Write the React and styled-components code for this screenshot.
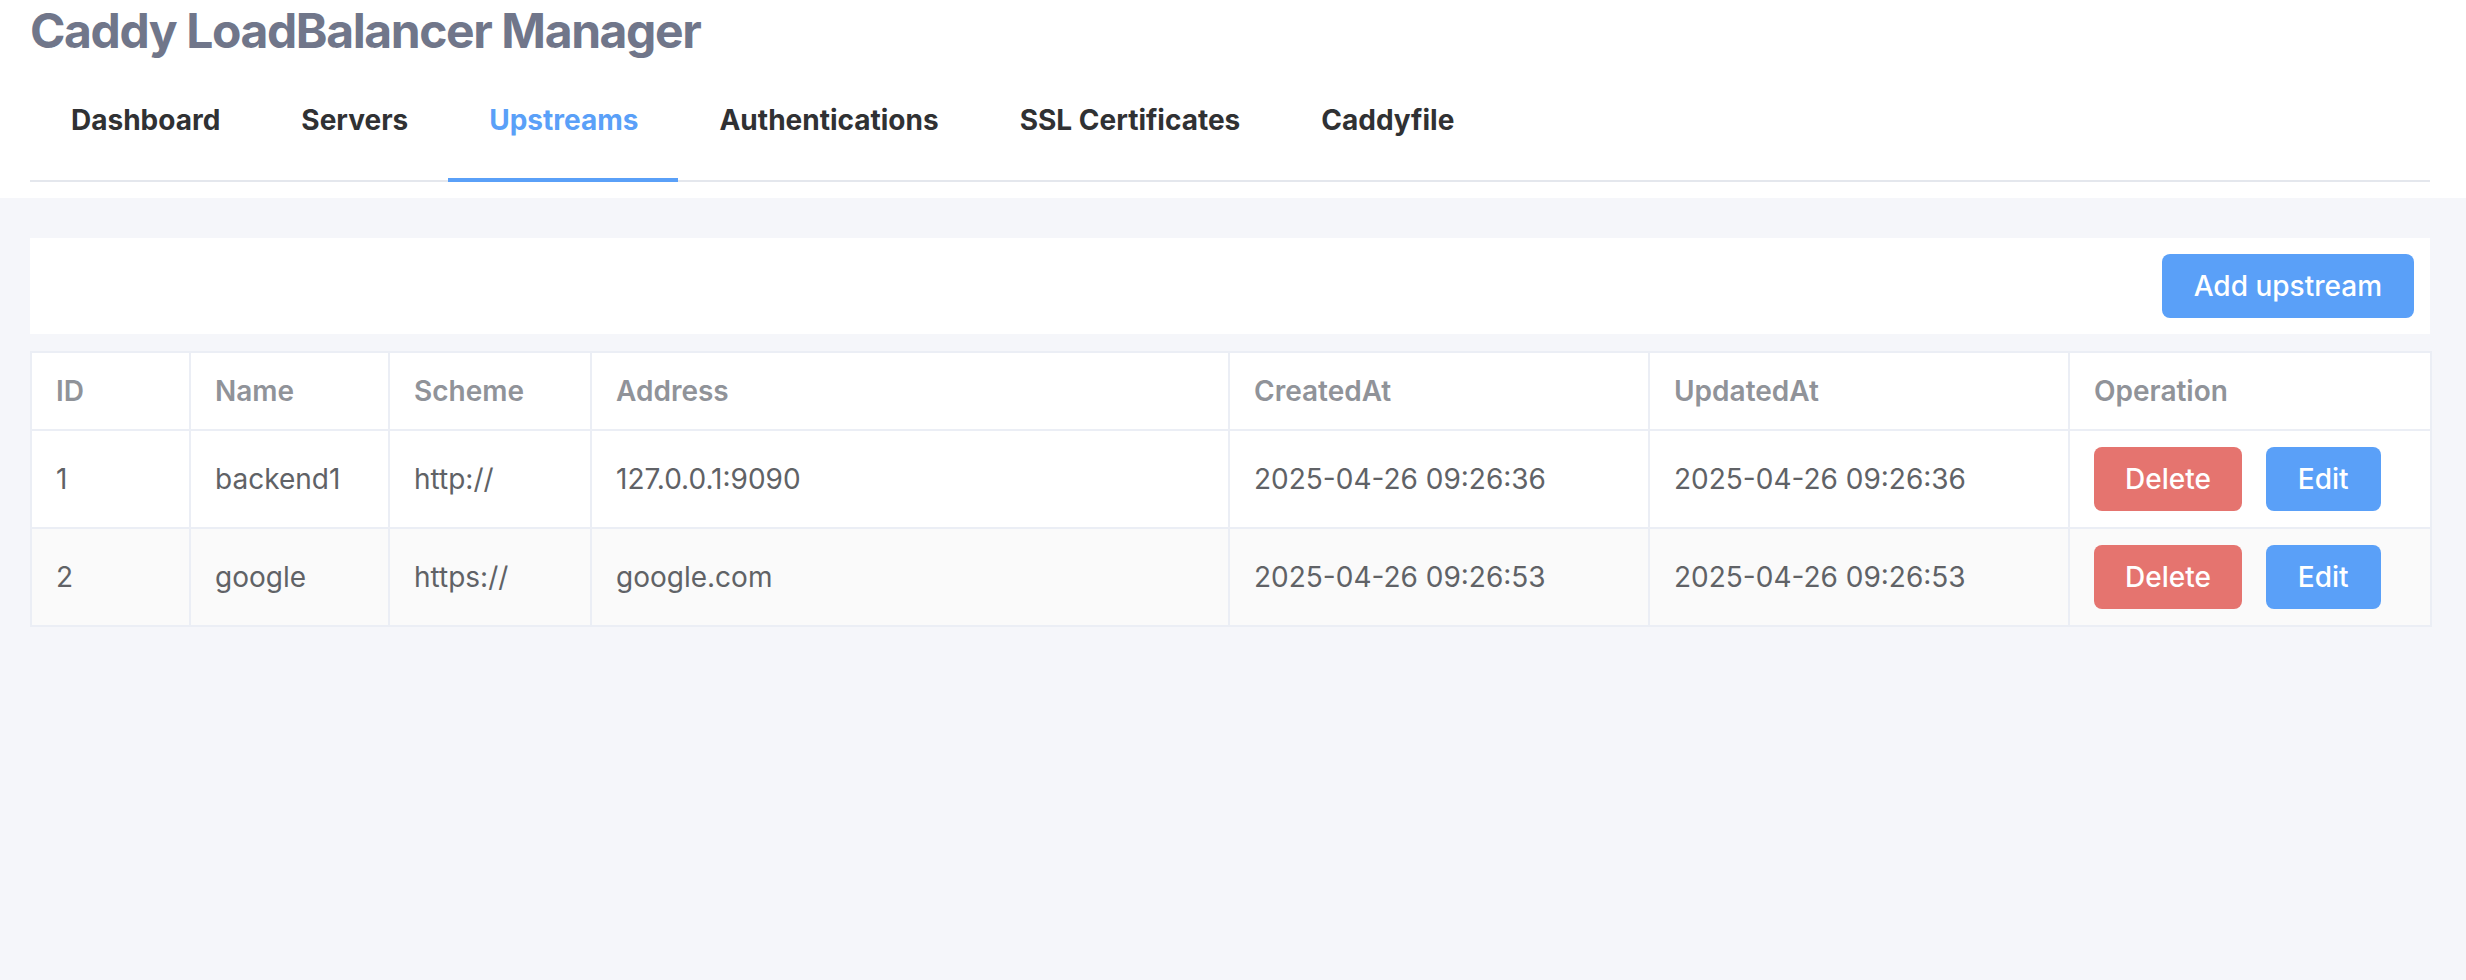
import React from 'react';
import styled, { createGlobalStyle } from 'styled-components';

const GlobalStyle = createGlobalStyle`
    html, body {
        margin: 0;
        padding: 0;
        background: #f5f6fa;
        font-family: Inter, "Noto Sans", "Liberation Sans", sans-serif;
    }
    * { box-sizing: border-box; }
`;

const TABS = [ 'Dashboard', 'Servers', 'Upstreams', 'Authentications', 'SSL Certificates', 'Caddyfile' ];

const COLUMNS = [
    { key: 'id', label: 'ID', width: 159 },
    { key: 'name', label: 'Name', width: 199 },
    { key: 'scheme', label: 'Scheme', width: 202 },
    { key: 'address', label: 'Address', width: 638 },
    { key: 'createdAt', label: 'CreatedAt', width: 420 },
    { key: 'updatedAt', label: 'UpdatedAt', width: 420 },
];

const UPSTREAMS = [
    { id: 1, name: 'backend1', scheme: 'http://', address: '127.0.0.1:9090', createdAt: '2025-04-26 09:26:36', updatedAt: '2025-04-26 09:26:36' },
    { id: 2, name: 'google', scheme: 'https://', address: 'google.com', createdAt: '2025-04-26 09:26:53', updatedAt: '2025-04-26 09:26:53' },
];

const
    Header = styled.header`
        background: #fff;
        padding: 0 36px 16px 30px;
    `,
    Title = styled.h1`
        margin: 0;
        height: 62px;
        line-height: 62px;
        font-size: 48px;
        font-weight: 700;
        letter-spacing: -1.4px;
        color: #70768a;
    `,
    TabBar = styled.nav`
        display: flex;
        border-bottom: 2px solid #e4e7ed;
    `,
    Tab = styled.div`
        height: 120px;
        padding: 0 40px 0 41px;
        display: flex;
        align-items: center;
        font-size: 28px;
        font-weight: 700;
        color: ${ p => p.active ? '#5aa0f8' : '#303133' };
        border-bottom: 4px solid ${ p => p.active ? '#5aa0f8' : 'transparent' };
        margin-bottom: -2px;
    `,
    Main = styled.main`
        padding: 40px 36px 40px 30px;
    `,
    Toolbar = styled.div`
        display: flex;
        justify-content: flex-end;
        padding: 16px;
        background: #fff;
        margin-bottom: 17px;
    `,
    Button = styled.button`
        height: 64px;
        padding: 0 ${ p => p.pad || 32 }px;
        border: none;
        border-radius: 8px;
        font-family: inherit;
        font-size: 28px;
        font-weight: 500;
        color: #fff;
        background: ${ p => p.danger ? '#e5746f' : '#5aa0f8' };
        cursor: pointer;
    `,
    Table = styled.table`
        width: 2400px;
        border-collapse: collapse;
        table-layout: fixed;
        background: #fff;
        font-size: 28px;
    `,
    Col = styled.col`
        width: ${ p => p.size }px;
    `,
    HeadCell = styled.th`
        height: 78px;
        padding: 0 24px;
        text-align: left;
        font-weight: 600;
        color: #909399;
        border: 2px solid #ebeef5;
    `,
    Row = styled.tr`
        background: ${ p => p.striped ? '#fafafa' : '#fff' };
    `,
    Cell = styled.td`
        height: 98px;
        padding: 0 24px;
        color: #606266;
        border: 2px solid #ebeef5;
    `,
    Actions = styled.div`
        display: flex;
        gap: 24px;
    `
;

const App = () => (
    <>
        <GlobalStyle />
        <Header>
            <Title>Caddy LoadBalancer Manager</Title>
            <TabBar>
                { TABS.map( tab => (
                    <Tab key={ tab } active={ tab === 'Upstreams' }>{ tab }</Tab>
                ) ) }
            </TabBar>
        </Header>
        <Main>
            <Toolbar>
                <Button>Add upstream</Button>
            </Toolbar>
            <Table>
                <colgroup>
                    { COLUMNS.map( col => <Col key={ col.key } size={ col.width } /> ) }
                    <Col size={ 362 } />
                </colgroup>
                <thead>
                    <tr>
                        { COLUMNS.map( col => <HeadCell key={ col.key }>{ col.label }</HeadCell> ) }
                        <HeadCell>Operation</HeadCell>
                    </tr>
                </thead>
                <tbody>
                    { UPSTREAMS.map( ( item, i ) => (
                        <Row key={ item.id } striped={ i % 2 === 1 }>
                            { COLUMNS.map( col => <Cell key={ col.key }>{ item[col.key] }</Cell> ) }
                            <Cell>
                                <Actions>
                                    <Button danger pad={ 31 }>Delete</Button>
                                    <Button>Edit</Button>
                                </Actions>
                            </Cell>
                        </Row>
                    ) ) }
                </tbody>
            </Table>
        </Main>
    </>
);

export default App;
